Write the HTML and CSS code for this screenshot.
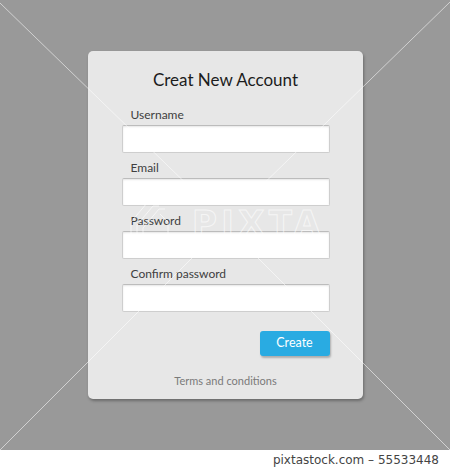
FILE: index.html
```html
<!DOCTYPE html>
<html lang="en">
<head>
<meta charset="utf-8">
<title>Creat New Account</title>
<link rel="stylesheet" href="styles.css">
</head>
<body>
<div class="stage">
  <form class="card">
    <h1 class="title">Creat New Account</h1>
    <div class="fields">
      <div class="field">
        <label class="label">Username</label>
        <input class="input" type="text">
      </div>
      <div class="field">
        <label class="label">Email</label>
        <input class="input" type="text">
      </div>
      <div class="field">
        <label class="label">Password</label>
        <input class="input" type="password">
      </div>
      <div class="field">
        <label class="label">Confirm password</label>
        <input class="input" type="password">
      </div>
    </div>
    <div class="actions">
      <button class="btn" type="button">Create</button>
    </div>
    <p class="terms">Terms and conditions</p>
  </form>
  <svg class="watermark" width="450" height="450" viewBox="0 0 450 450">
    <g class="wm-lines">
      <line x1="0" y1="3" x2="200" y2="197"/>
      <line x1="450" y1="2" x2="250" y2="197"/>
      <line x1="0" y1="450" x2="198" y2="252"/>
      <line x1="450" y1="450" x2="252" y2="252"/>
    </g>
    <g class="wm-logo">
      <path d="M131 240 V222 L147 203 H153"/>
      <path d="M137 245 V225 L153 206 H159"/>
      <path d="M143 250 V228 L159 209 H165"/>
      <path d="M160 214 L168 222 V236 L160 244"/>
      <text class="wm-text" x="192" y="235" textLength="128" lengthAdjust="spacing">PIXTA</text>
    </g>
  </svg>
</div>
<div class="credit">pixtastock.com – 55533448</div>
</body>
</html>
```

FILE: styles.css
```css
html, body {
  margin: 0;
  padding: 0;
  background: #ffffff;
}

body {
  width: 450px;
  font-family: Lato, "Open Sans", sans-serif;
}

.stage {
  position: relative;
  height: 450px;
  box-sizing: border-box;
  padding-top: 51px;
  background: #999999;
  overflow: hidden;
}

.card {
  width: 275px;
  height: 348px;
  margin: 0 auto;
  box-sizing: border-box;
  padding: 17px 33px 0 34px;
  background: #e7e7e7;
  border-radius: 5px;
  box-shadow: 1px 2px 3px rgba(0, 0, 0, 0.3);
}

.title {
  margin: 0 0 15px;
  font-size: 17px;
  font-weight: 400;
  line-height: 24px;
  color: #1c1c1c;
  text-align: center;
}

.fields {
  display: flex;
  flex-direction: column;
  gap: 7px;
}

.field {
  display: flex;
  flex-direction: column;
}

.label {
  display: block;
  padding-left: 9px;
  margin-bottom: 2px;
  font-size: 12px;
  line-height: 16px;
  color: #404040;
}

.input {
  display: block;
  width: 100%;
  height: 28px;
  margin: 0;
  box-sizing: border-box;
  background: #ffffff;
  border: 1px solid #cecece;
  border-top-color: #bcbcbc;
  border-radius: 2px;
  box-shadow: inset 0 1px 2px rgba(0, 0, 0, 0.1);
  outline: none;
}

.actions {
  display: flex;
  justify-content: flex-end;
  margin-top: 19px;
}

.btn {
  width: 70px;
  height: 25px;
  padding: 0 0 2px;
  box-sizing: border-box;
  border: none;
  border-radius: 3px;
  background: #29abe2;
  color: #ffffff;
  font-family: Lato, "Open Sans", sans-serif;
  font-size: 12.5px;
  line-height: 23px;
  box-shadow: 1px 2px 2px rgba(0, 0, 0, 0.25);
}

.terms {
  margin: 18px 0 0;
  font-size: 11px;
  line-height: 14px;
  color: #7a7a7a;
  text-align: center;
}

.watermark {
  position: absolute;
  left: 0;
  top: 0;
  pointer-events: none;
}

.wm-lines line {
  stroke: #ffffff;
  stroke-width: 1;
  stroke-opacity: 0.55;
}

.wm-logo path {
  fill: none;
  stroke: #ffffff;
  stroke-width: 1;
  stroke-opacity: 0.6;
}

.wm-text {
  font-family: "DejaVu Sans", sans-serif;
  font-weight: 700;
  font-size: 34px;
  fill: none;
  stroke: #ffffff;
  stroke-width: 1;
  stroke-opacity: 0.6;
}

.credit {
  height: 19px;
  box-sizing: border-box;
  padding: 2px 11px 0 0;
  font-family: "DejaVu Sans", sans-serif;
  font-size: 12px;
  line-height: 17px;
  color: #444444;
  text-align: right;
  white-space: nowrap;
}
```
